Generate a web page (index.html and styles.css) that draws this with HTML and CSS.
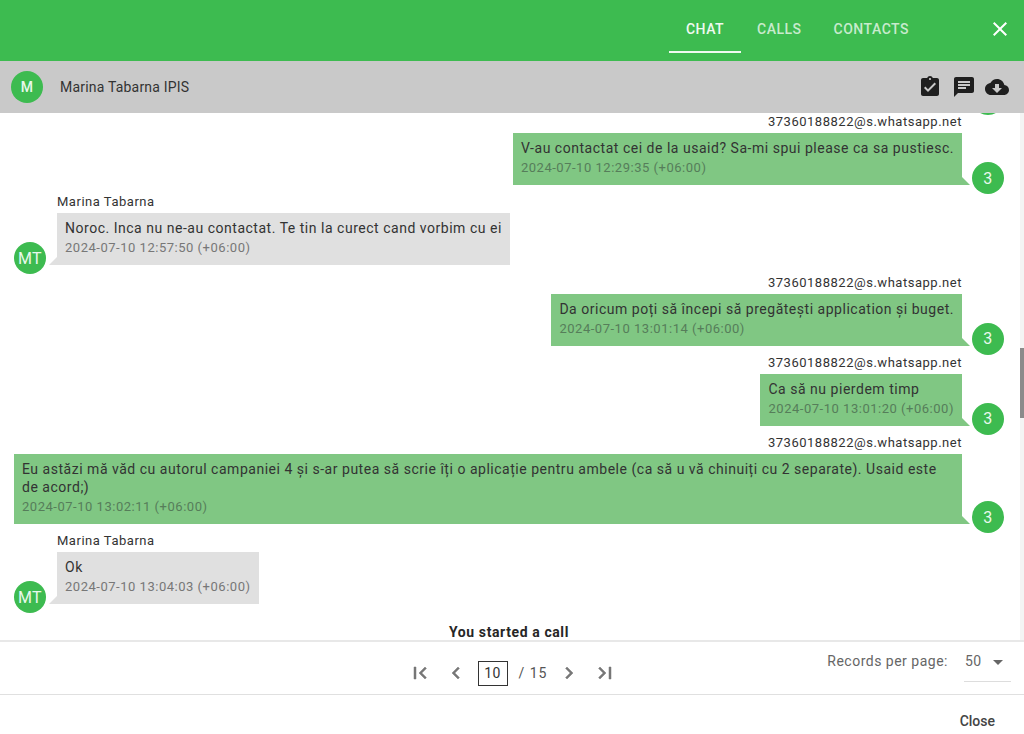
FILE: index.html
```html
<!DOCTYPE html>
<html lang="en">
<head>
<meta charset="utf-8">
<title>Chat</title>
<link rel="stylesheet" href="styles.css">
</head>
<body>
<div class="app">
  <header class="topbar">
    <nav class="tabs">
      <a class="tab active">Chat</a>
      <a class="tab">Calls</a>
      <a class="tab">Contacts</a>
    </nav>
    <svg class="close-x" viewBox="0 0 24 24"><path d="M19 6.41L17.59 5 12 10.59 6.41 5 5 6.41 10.59 12 5 17.59 6.41 19 12 13.41 17.59 19 19 17.59 13.41 12z"/></svg>
  </header>
  <div class="contact">
    <span class="avatar">M</span>
    <span class="contact-name">Marina Tabarna IPIS</span>
    <div class="contact-icons">
      <svg viewBox="0 0 24 24"><path d="M19 3h-4.18C14.4 1.84 13.3 1 12 1c-1.3 0-2.4.84-2.82 2H5c-1.1 0-2 .9-2 2v14c0 1.1.9 2 2 2h14c1.1 0 2-.9 2-2V5c0-1.1-.9-2-2-2zm-7 0c.55 0 1 .45 1 1s-.45 1-1 1-1-.45-1-1 .45-1 1-1zm-2 14l-4-4 1.41-1.41L10 14.17l6.59-6.59L18 9l-8 8z"/></svg>
      <svg viewBox="0 0 24 24"><path d="M20 2H4c-1.1 0-1.99.9-1.99 2L2 22l4-4h14c1.1 0 2-.9 2-2V4c0-1.1-.9-2-2-2zM6 9h12v2H6V9zm8 5H6v-2h8v2zm4-6H6V6h12v2z"/></svg>
      <svg viewBox="0 0 24 24"><path d="M19.35 10.04C18.67 6.59 15.64 4 12 4 9.11 4 6.6 5.64 5.35 8.04 2.34 8.36 0 10.91 0 14c0 3.31 2.69 6 6 6h13c2.76 0 5-2.24 5-5 0-2.64-2.05-4.78-4.65-4.96zM17 13l-5 5-5-5h3V9h4v4h3z"/></svg>
    </div>
  </div>
  <div class="chat-wrap">
    <main class="chat">
      <div class="clipped"><span class="avatar"></span></div>

      <div class="msg out">
        <div class="body">
          <div class="sender">37360188822@s.whatsapp.net</div>
          <div class="bubble"><div class="text">V-au contactat cei de la usaid? Sa-mi spui please ca sa pustiesc.</div><div class="time">2024-07-10 12:29:35 (+06:00)</div></div>
        </div>
        <span class="avatar">3</span>
      </div>

      <div class="msg in">
        <span class="avatar">MT</span>
        <div class="body">
          <div class="sender">Marina Tabarna</div>
          <div class="bubble"><div class="text">Noroc. Inca nu ne-au contactat. Te tin la curect cand vorbim cu ei</div><div class="time">2024-07-10 12:57:50 (+06:00)</div></div>
        </div>
      </div>

      <div class="msg out">
        <div class="body">
          <div class="sender">37360188822@s.whatsapp.net</div>
          <div class="bubble"><div class="text">Da oricum poți să începi să pregătești application și buget.</div><div class="time">2024-07-10 13:01:14 (+06:00)</div></div>
        </div>
        <span class="avatar">3</span>
      </div>

      <div class="msg out">
        <div class="body">
          <div class="sender">37360188822@s.whatsapp.net</div>
          <div class="bubble"><div class="text">Ca să nu pierdem timp</div><div class="time">2024-07-10 13:01:20 (+06:00)</div></div>
        </div>
        <span class="avatar">3</span>
      </div>

      <div class="msg out">
        <div class="body">
          <div class="sender">37360188822@s.whatsapp.net</div>
          <div class="bubble"><div class="text">Eu astăzi mă văd cu autorul campaniei 4 și s-ar putea să scrie îți o aplicație pentru ambele (ca să u vă chinuiți cu 2 separate). Usaid este de acord;)</div><div class="time">2024-07-10 13:02:11 (+06:00)</div></div>
        </div>
        <span class="avatar">3</span>
      </div>

      <div class="msg in">
        <span class="avatar">MT</span>
        <div class="body">
          <div class="sender">Marina Tabarna</div>
          <div class="bubble"><div class="text">Ok</div><div class="time">2024-07-10 13:04:03 (+06:00)</div></div>
        </div>
      </div>

      <div class="event">You started a call</div>
    </main>
    <div class="scrollbar"><div class="thumb"></div></div>
  </div>
  <div class="pagination">
    <div class="pager">
      <svg viewBox="0 0 24 24"><path d="M18.41 16.59L13.82 12l4.59-4.59L17 6l-6 6 6 6zM6 6h2v12H6z"/></svg>
      <svg viewBox="0 0 24 24"><path d="M15.41 7.41L14 6l-6 6 6 6 1.41-1.41L10.83 12z"/></svg>
      <span class="page-box">10</span>
      <span class="page-total">/ 15</span>
      <svg viewBox="0 0 24 24"><path d="M10 6L8.59 7.41 13.17 12l-4.58 4.59L10 18l6-6z"/></svg>
      <svg viewBox="0 0 24 24"><path d="M5.59 7.41L10.18 12l-4.59 4.59L7 18l6-6-6-6zM16 6h2v12h-2z"/></svg>
    </div>
    <div class="records">
      <span class="records-label">Records per page:</span>
      <div class="select"><span>50</span><i class="caret"></i></div>
    </div>
  </div>
  <footer class="footer"><span class="close-btn">Close</span></footer>
</div>
</body>
</html>
```
FILE: styles.css
```css
* { box-sizing: border-box; }
html, body { margin: 0; height: 100%; }
body { font-family: Roboto, "Liberation Sans", sans-serif; font-size: 14px; color: #333; background: #fff; overflow: hidden; }
.app { width: 1024px; height: 734px; display: flex; flex-direction: column; }

.topbar { height: 61px; flex: none; background: #3dbb50; display: flex; justify-content: flex-end; align-items: flex-start; padding: 0 12px 0 0; }
.tabs { display: flex; margin-top: 5px; margin-right: 63px; }
.tab { min-width: 72px; height: 48px; padding: 2px 16px 0; display: flex; align-items: center; justify-content: center; text-transform: uppercase; font-weight: 500; font-size: 14px; letter-spacing: .5px; color: rgba(255,255,255,.72); border-bottom: 2px solid transparent; }
.tab.active { color: #fff; opacity: .92; border-bottom-color: #fff; }
.close-x { width: 24px; height: 24px; fill: #fff; margin-top: 17px; }

.avatar { width: 32px; height: 32px; flex: none; border-radius: 50%; background: #3dbb50; color: #e9f8ec; display: flex; align-items: center; justify-content: center; font-size: 16px; letter-spacing: .3px; }

.contact { height: 52px; flex: none; background: #c9c9c9; display: flex; align-items: center; padding: 0 15px 0 11px; }
.contact .avatar { font-size: 14px; font-weight: 500; }
.contact-name { margin-left: 17px; font-size: 14px; color: #333; letter-spacing: .2px; }
.contact-icons { margin-left: auto; display: flex; gap: 9.5px; }
.contact-icons svg { width: 24px; height: 24px; fill: #1f1f1f; display: block; }

.chat-wrap { flex: 1; min-height: 0; display: flex; }
.chat { flex: 1; min-width: 0; overflow: hidden; padding: 0 16px 0 14px; letter-spacing: .52px; }
.clipped { margin: -30px 0 -2px; display: flex; justify-content: flex-end; }
.scrollbar { width: 4px; flex: none; background: #f4f4f4; padding-top: 235px; }
.thumb { height: 70px; background: #8b8b8b; }

.msg { display: flex; align-items: flex-end; margin-bottom: 8.25px; }
.msg.out { justify-content: flex-end; }
.msg .avatar { margin-bottom: -9px; }
.msg.in .avatar { margin-right: 11px; }
.msg.out .avatar { margin-left: 10px; }
.body { display: flex; flex-direction: column; min-width: 0; }
.msg.out .body { align-items: flex-end; }
.msg.in .body { align-items: flex-start; }
.sender { height: 20px; line-height: 18px; font-size: 13px; color: #333; }
.bubble { position: relative; padding: 6px 8px 8px; }
.msg.out .bubble { background: #80c783; }
.msg.in .bubble { background: #e0e0e0; }
.msg.out .bubble::after { content: ""; position: absolute; right: -8px; bottom: 0; border-left: 8px solid #80c783; border-top: 8px solid transparent; }
.msg.in .bubble::after { content: ""; position: absolute; left: -8px; bottom: 0; border-right: 8px solid #e0e0e0; border-top: 8px solid transparent; }
.text { line-height: 18px; color: #333; }
.time { font-size: 13px; line-height: 19px; margin-top: 1px; color: #777; }
.msg.out .time { color: #567d5a; }
.event { text-align: center; font-weight: 700; font-size: 14px; color: #262626; line-height: 20px; letter-spacing: .6px; margin-top: 18px; }

.pagination { height: 55px; flex: none; border-top: 2px solid #e8e8e8; border-bottom: 1px solid #e0e0e0; display: grid; grid-template-columns: 1fr auto 1fr; }
.pager { grid-column: 2; display: flex; align-items: center; height: 100%; padding-top: 10px; color: #555; font-size: 14px; letter-spacing: .3px; }
.pager svg { width: 24px; height: 24px; fill: #777; stroke: #777; stroke-width: .5; display: block; margin: 0 6px; }
.page-box { width: 30px; height: 25px; border: 1px solid #333; display: flex; align-items: center; justify-content: center; color: #333; margin: 0 5px 0 4px; }
.page-total { margin: 0 3px 0 6px; color: #555; letter-spacing: 1px; }
.records { grid-column: 3; justify-self: end; display: flex; align-items: flex-start; padding-top: 11px; margin-right: 13px; color: #666; font-size: 14px; letter-spacing: .5px; }
.select { margin-left: 16px; width: 47px; height: 29px; border-bottom: 1px solid #ddd; display: flex; justify-content: space-between; padding: 0 8px 0 1px; }
.caret { margin-top: 7px; border-left: 5px solid transparent; border-right: 5px solid transparent; border-top: 5px solid #666; width: 0; height: 0; }

.footer { height: 39px; flex: none; display: flex; justify-content: flex-end; align-items: center; padding: 12px 29px 0 0; }
.close-btn { font-weight: 500; font-size: 14px; color: #444; }
```
